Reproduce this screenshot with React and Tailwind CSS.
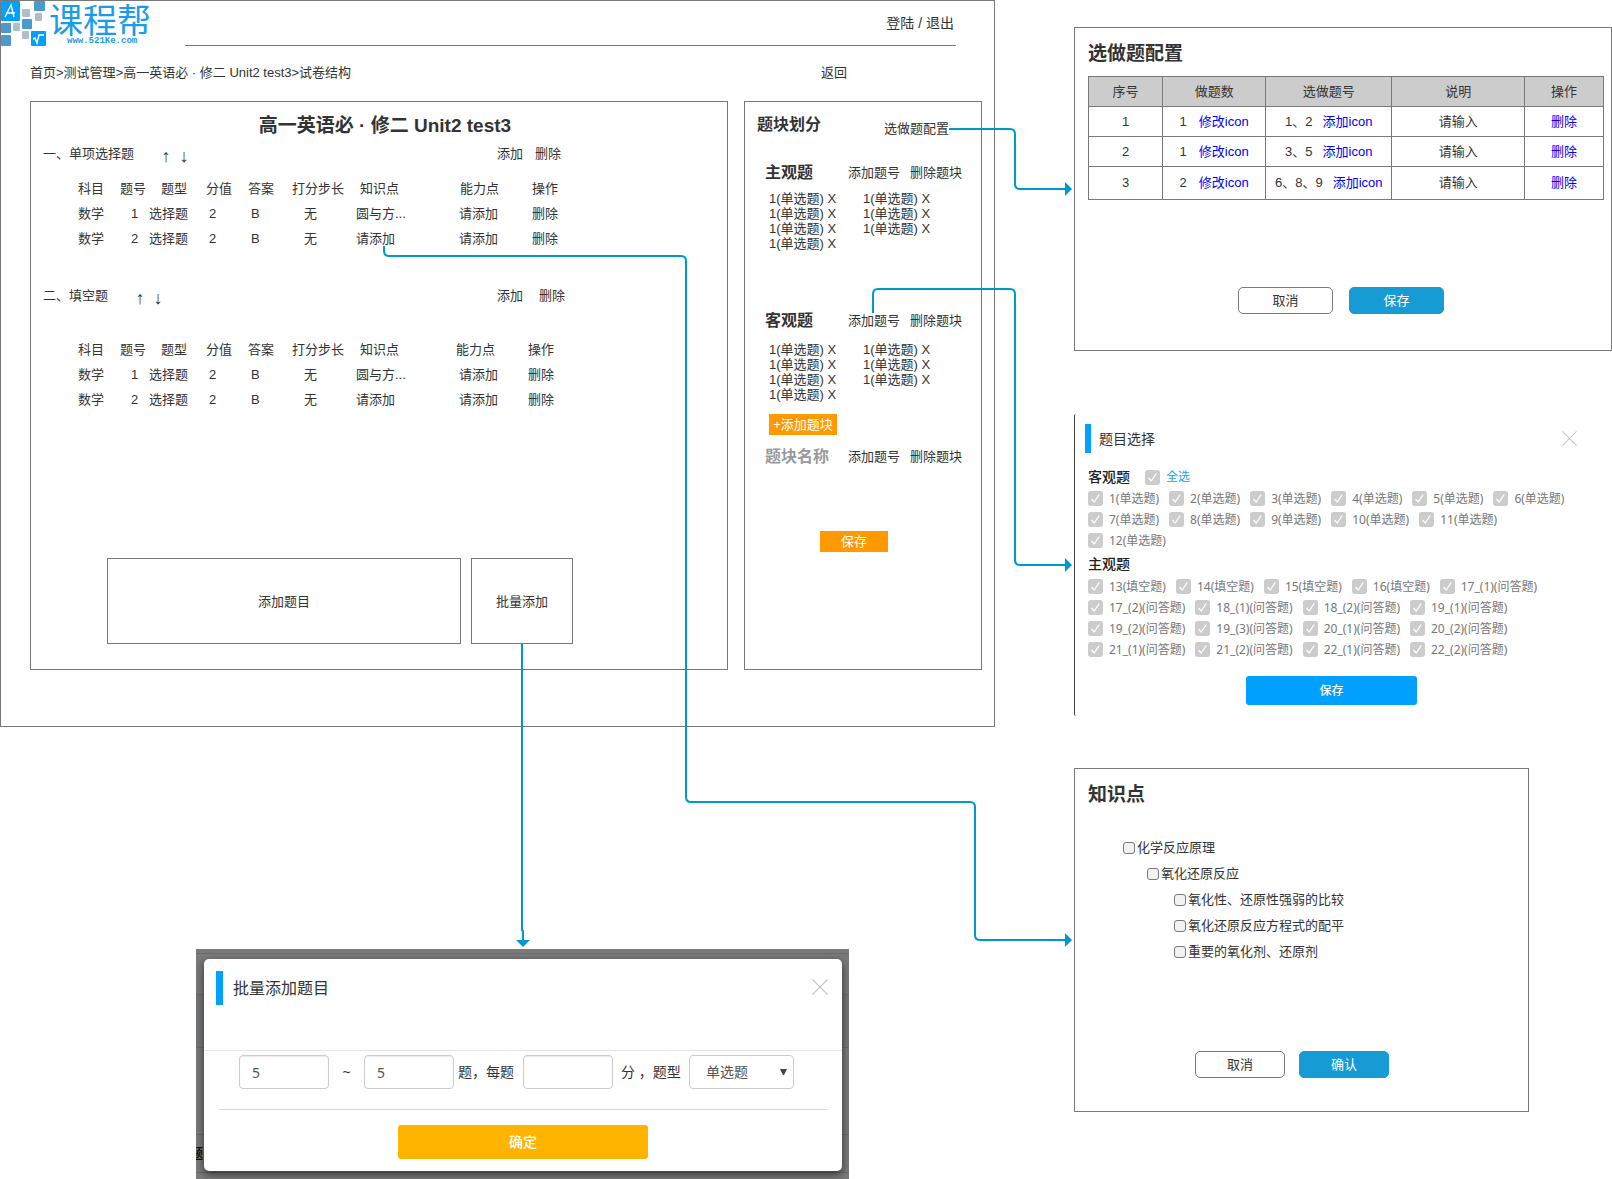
import React from "react";

const SANS = "font-['Liberation_Sans','Noto_Sans_CJK_SC',sans-serif]";
const UI = "font-['Noto_Sans','Noto_Sans_CJK_SC',sans-serif]";

function Logo() {
  return (
    <div className="flex h-[45px] w-[184px] shrink-0 items-start">
      <svg width="48" height="46" viewBox="0 0 48 46" className="shrink-0" aria-hidden="true">
        <rect x="0" y="0" width="19" height="20" rx="1" fill="#00a0ff" />
        <rect x="33" y="0" width="11" height="10" rx="1" fill="#4a9bcb" />
        <rect x="21" y="8" width="8" height="8" rx="1" fill="#b0bec5" />
        <rect x="34" y="12" width="7" height="8" rx="1" fill="#b0bec5" />
        <rect x="21" y="18" width="10" height="10" rx="1" fill="#4a9bcb" />
        <rect x="0" y="22" width="10" height="10" rx="1" fill="#4a9bcb" />
        <rect x="12" y="22" width="7" height="8" rx="1" fill="#b0bec5" />
        <rect x="21" y="30" width="7" height="8" rx="1" fill="#b0bec5" />
        <rect x="0" y="34" width="10" height="11" rx="1" fill="#4a9bcb" />
        <rect x="30" y="30" width="15" height="15" rx="1" fill="#00a0ff" />
        <path d="M4 16 L10 4 L13 16 M5 12 H14" fill="none" stroke="#fff" strokeWidth="1.4" />
        <path d="M32 38 L34 37 L36 42 L38 34 H43" fill="none" stroke="#fff" strokeWidth="1.4" />
      </svg>
      <div className="flex flex-col items-start text-[#1a9cec]">
        <span className="font-['Noto_Sans_CJK_SC',sans-serif] text-[34px] leading-[35px]">课程帮</span>
        <span className="pl-[18px] font-['Liberation_Mono',monospace] text-[9px] font-bold leading-[10px]">
          www.521Ke.com
        </span>
      </div>
    </div>
  );
}

const questionRows = [
  ["数学", "1", "选择题", "2", "B", "无", "圆与方..."],
  ["数学", "2", "选择题", "2", "B", "无", "请添加"],
];

function QuestionTable({ spread }) {
  const inset = spread ? "pl-1" : "";
  return (
    <table className="ml-[35px] w-[489px] table-fixed text-left">
      <colgroup>
        <col className="w-[42px]" />
        <col className="w-[29px]" />
        <col className="w-[57px]" />
        <col className="w-[42px]" />
        <col className="w-[44px]" />
        <col className="w-[64px]" />
        <col className="w-[100px]" />
        <col className="w-[72px]" />
        <col className="w-[39px]" />
      </colgroup>
      <thead>
        <tr className="h-6 [&>th]:p-0 [&>th]:font-normal">
          <th>科目</th>
          <th>题号</th>
          <th><span className="pl-3">题型</span></th>
          <th>分值</th>
          <th>答案</th>
          <th>打分步长</th>
          <th><span className="pl-1">知识点</span></th>
          <th><span className={inset}>能力点</span></th>
          <th><span className={inset}>操作</span></th>
        </tr>
      </thead>
      <tbody>
        {questionRows.map((r) => (
          <tr key={r[1]} className="h-[25px]">
            <td>{r[0]}</td>
            <td className="pl-[11px]">{r[1]}</td>
            <td>{r[2]}</td>
            <td className="pl-[3px]">{r[3]}</td>
            <td className="pl-[3px]">{r[4]}</td>
            <td className="pl-3">{r[5]}</td>
            <td><button type="button">{r[6]}</button></td>
            <td className="pl-[3px]"><button type="button">请添加</button></td>
            <td className={inset}><button type="button">删除</button></td>
          </tr>
        ))}
      </tbody>
    </table>
  );
}

function SectionHead({ title, wide }) {
  return (
    <div className="flex h-5 items-center">
      <div className="flex w-[454px] items-center">
        <h3>{title}</h3>
        <div className="flex pl-[23px] pt-1 text-[18px]">
          <button type="button" aria-label="上移" className="w-[18px]">↑</button>
          <button type="button" aria-label="下移" className="w-[18px]">↓</button>
        </div>
      </div>
      <div className={wide ? "flex gap-4" : "flex gap-3"}>
        <button type="button">添加</button>
        <button type="button">删除</button>
      </div>
    </div>
  );
}

function BlockHead({ title, muted }) {
  return (
    <div className="flex h-5 items-center pl-5">
      <h3 className={muted ? "w-[83px] text-base font-bold text-[#999]" : "w-[83px] text-base font-bold"}>{title}</h3>
      <div className="flex gap-[10px]">
        <button type="button">添加题号</button>
        <button type="button">删除题块</button>
      </div>
    </div>
  );
}

function BlockList() {
  return (
    <ul className="ml-6 grid w-[188px] grid-cols-2 leading-[15px]">
      {[0, 1, 2, 3, 4, 5, 6].map((i) => (
        <li key={i}>1(单选题) X</li>
      ))}
    </ul>
  );
}

function MainWindow() {
  return (
    <main className="border border-[#797979] pb-[56px]">
      <header className="flex">
        <Logo />
        <div className="mr-[38px] flex h-[45px] grow items-center justify-end border-b border-[#797979] pr-[2px] text-sm">
          <a href="#login">登陆 / 退出</a>
        </div>
      </header>
      <div className="mt-[17px] flex h-5 items-center pl-[29px] pr-[147px]">
        <nav>
          <a href="#home">首页</a>&gt;<a href="#tests">测试管理</a>&gt;<a href="#test">高一英语必 · 修二 Unit2 test3</a>&gt;试卷结构
        </nav>
        <a href="#back" className="ml-auto">返回</a>
      </div>
      <div className="mt-[18px] grid grid-cols-[698fr_238fr] gap-4 pl-[29px] pr-3">
        <section className="min-w-0 border border-[#797979] pb-[25px] pl-3 pt-3">
          <h1 className="h-6 text-center text-[19px] font-bold leading-6">高一英语必 · 修二 Unit2 test3</h1>
          <div className="mt-[6px]">
            <SectionHead title="一、单项选择题" />
          </div>
          <div className="mt-[13px]">
            <QuestionTable spread />
          </div>
          <div className="mt-[35px]">
            <SectionHead title="二、填空题" wide />
          </div>
          <div className="mt-8">
            <QuestionTable />
          </div>
          <div className="mt-[146px] flex gap-[10px] pl-16">
            <button type="button" className="h-[86px] w-[354px] border border-[#797979] pt-[2px]">添加题目</button>
            <button type="button" className="h-[86px] w-[102px] border border-[#797979] pt-[2px]">批量添加</button>
          </div>
        </section>
        <section className="min-w-0 border border-[#797979] pt-[11px]">
          <div className="flex items-start justify-between pl-3 pr-8">
            <h2 className="text-base font-bold leading-6">题块划分</h2>
            <button type="button" className="pt-[6px]">选做题配置</button>
          </div>
          <div className="mt-[24px] flex flex-col gap-2">
            <BlockHead title="主观题" />
            <BlockList />
          </div>
          <div className="mt-[60px] flex flex-col gap-[11px]">
            <BlockHead title="客观题" />
            <BlockList />
          </div>
          <button type="button" className="ml-6 mt-3 block h-[21px] w-[68px] bg-[#ff9900] text-white">+添加题块</button>
          <div className="mt-3">
            <BlockHead title="题块名称" muted />
          </div>
          <button type="button" className="ml-[75px] mt-16 block h-[21px] w-[68px] bg-[#ff9900] text-white">保存</button>
        </section>
      </div>
    </main>
  );
}

function CloseIcon({ size }) {
  return (
    <svg width={size} height={size} viewBox="0 0 16 16" aria-hidden="true">
      <path d="M0.5 0.5 L15.5 15.5 M15.5 0.5 L0.5 15.5" stroke="#c8c8c8" strokeWidth="1.1" />
    </svg>
  );
}

function BatchDialog() {
  const field = "h-[34px] w-[90px] rounded border border-[#ccc] bg-white pl-3 text-[#555] shadow-[inset_0_1px_1px_rgba(0,0,0,0.08)]";
  return (
    <div className={"relative ml-[196px] mt-[222px] w-[653px] overflow-hidden bg-[#7a7a7b] pb-2 pl-2 pr-[7px] pt-[10px] text-sm text-[#333] " + UI}>
      <div className="absolute inset-x-0 top-[4px] border-t border-[#6b6b6b]" />
      <div className="absolute inset-x-0 top-[45px] h-[54px] border-y border-[#6b6b6b] bg-[#757678]" />
      <div className="absolute inset-x-0 top-[185px] border-t border-[#6b6b6b]" />
      <div className="absolute inset-x-0 top-[223px] border-t border-[#6b6b6b]" />
      <span className="absolute -left-[6px] top-[198px] text-[13px] font-bold leading-[13px] text-[#111]" aria-hidden="true">题</span>
      <form className="relative rounded-[5px] bg-white pb-3 shadow-[0_3px_9px_rgba(0,0,0,0.6)]" onSubmit={(e) => e.preventDefault()}>
        <div className="flex h-[92px] items-start border-b border-[#e5e5e5] pl-3 pr-[14px] pt-3">
          <div className="h-[34px] w-[7px] bg-[#00a2ff]" />
          <h2 className="pl-[10px] pt-[5px] text-base leading-6">批量添加题目</h2>
          <button type="button" aria-label="关闭" className="ml-auto pt-2">
            <CloseIcon size={16} />
          </button>
        </div>
        <div className="flex items-center pl-[35px] pt-1">
          <input aria-label="起始题号" defaultValue="5" className={field} />
          <span className="w-[35px] text-center">~</span>
          <input aria-label="结束题号" defaultValue="5" className={field} />
          <label htmlFor="score" className="w-[69px] pl-1">题，每题</label>
          <input id="score" className={field} />
          <label htmlFor="kind" className="w-[76px] pl-2">分 ，题型</label>
          <span className="relative">
            <select id="kind" className="h-[34px] w-[105px] appearance-none rounded border border-[#ccc] bg-white pl-4 text-[#555]">
              <option>单选题</option>
            </select>
            <svg width="7" height="6" viewBox="0 0 7 6" className="pointer-events-none absolute right-[7px] top-[14px]" aria-hidden="true">
              <path d="M0 0 H7 L4 6 H3 Z" fill="#444" />
            </svg>
          </span>
        </div>
        <div className="mx-[15px] mt-5 border-t border-[#d6d7de]" />
        <button type="submit" className="ml-[194px] mt-[15px] block h-[34px] w-[250px] rounded-[3px] bg-[#ffb500] font-medium text-white">
          确定
        </button>
      </form>
    </div>
  );
}

function DialogButtons({ ok }) {
  return (
    <>
      <button type="button" className="h-[27px] min-w-[90px] flex-1 rounded-[5px] border border-[#797979] bg-white">取消</button>
      <button type="button" className="h-[27px] min-w-[90px] flex-1 rounded-[5px] border border-[#169bd5] bg-[#169bd5] text-white">{ok}</button>
    </>
  );
}

const optionRows = [
  ["1", "1", "1、2"],
  ["2", "1", "3、5"],
  ["3", "2", "6、8、9"],
];

function OptionalDialog() {
  return (
    <section className="border border-[#797979] pb-9 pl-[13px] pr-[7px] pt-3">
      <h2 className="text-[19px] font-bold leading-7">选做题配置</h2>
      <table className="mt-2 w-full table-fixed border-collapse text-center [&_td]:border [&_td]:border-[#797979] [&_th]:border [&_th]:border-[#797979]">
        <colgroup>
          <col className="w-[14.4%]" />
          <col className="w-[20%]" />
          <col className="w-[24.5%]" />
          <col className="w-[25.8%]" />
          <col className="w-[15.3%]" />
        </colgroup>
        <thead>
          <tr className="h-[30px] bg-[#ccc] [&>th]:font-normal">
            <th>序号</th>
            <th>做题数</th>
            <th>选做题号</th>
            <th>说明</th>
            <th>操作</th>
          </tr>
        </thead>
        <tbody>
          {optionRows.map((r) => (
            <tr key={r[0]} className="h-[30px] last:h-[33px]">
              <td>{r[0]}</td>
              <td>
                <span className="flex justify-center gap-3">
                  {r[1]}
                  <a href="#edit" className="text-[#0000ff]">修改icon</a>
                </span>
              </td>
              <td>
                <span className="flex justify-center gap-[10px]">
                  {r[2]}
                  <a href="#add" className="text-[#0000ff]">添加icon</a>
                </span>
              </td>
              <td>请输入</td>
              <td><a href="#remove" className="text-[#0000ff]">删除</a></td>
            </tr>
          ))}
        </tbody>
      </table>
      <div className="ml-[150px] mt-[87px] flex w-[206px] gap-4">
        <DialogButtons ok="保存" />
      </div>
    </section>
  );
}

function Tick({ children, accent }) {
  return (
    <label className="flex items-center gap-[6px]">
      <span className="grid">
        <input type="checkbox" defaultChecked className="col-start-1 row-start-1 size-[15px] appearance-none rounded-[3px] bg-[#ccc]" />
        <svg width="15" height="15" viewBox="0 0 15 15" className="pointer-events-none col-start-1 row-start-1" aria-hidden="true">
          <path d="M3.5 8 L6.2 11 L11.2 3.5" fill="none" stroke="#fff" strokeWidth="1.3" />
        </svg>
      </span>
      <span className={accent ? "text-[#1a9ff5]" : ""}>{children}</span>
    </label>
  );
}

const objective = [
  ["1", "2", "3", "4", "5", "6"],
  ["7", "8", "9", "10", "11"],
  ["12"],
].map((row) => row.map((n) => n + "(单选题)"));

const subjective = [
  ["13(填空题)", "14(填空题)", "15(填空题)", "16(填空题)", "17_(1)(问答题)"],
  ["17_(2)(问答题)", "18_(1)(问答题)", "18_(2)(问答题)", "19_(1)(问答题)"],
  ["19_(2)(问答题)", "19_(3)(问答题)", "20_(1)(问答题)", "20_(2)(问答题)"],
  ["21_(1)(问答题)", "21_(2)(问答题)", "22_(1)(问答题)", "22_(2)(问答题)"],
];

function TickRows({ rows }) {
  return rows.map((row) => (
    <div key={row[0]} className="flex h-[21px] items-center gap-[10px]">
      {row.map((t) => (
        <Tick key={t}>{t}</Tick>
      ))}
    </div>
  ));
}

function PickDialog() {
  return (
    <section className={"mt-[63px] w-full max-w-[513px] rounded-l-[2px] border-l border-[#444] pb-[11px] pl-[10px] pt-[10px] text-xs text-[#777] " + UI}>
      <div className="flex items-center">
        <div className="h-[29px] w-[6px] bg-[#00a2ff]" />
        <h2 className="pl-2 text-sm leading-5 text-[#333]">题目选择</h2>
        <button type="button" aria-label="关闭" className="ml-auto pr-[10px]">
          <CloseIcon size={15} />
        </button>
      </div>
      <div className="pl-[3px]">
        <div className="mt-[13px] flex h-[22px] items-center gap-[15px]">
          <h3 className="text-sm font-medium text-[#222]">客观题</h3>
          <Tick accent>全选</Tick>
        </div>
        <TickRows rows={objective} />
        <h3 className="flex h-[25px] items-center text-sm font-medium text-[#222]">主观题</h3>
        <TickRows rows={subjective} />
      </div>
      <button type="button" className="ml-[161px] mt-4 block h-[29px] w-[171px] rounded-[3px] bg-[#00a0ff] font-medium text-white">
        保存
      </button>
    </section>
  );
}

function Node({ children, level }) {
  const indent = ["pl-[35px]", "pl-[59px]", "pl-[86px]"][level];
  return (
    <li className={indent}>
      <label className="flex h-[26px] items-center gap-[2px]">
        <input type="checkbox" className="size-3 appearance-none rounded-[3px] border border-[#797979] bg-[#f2f2f2]" />
        {children}
      </label>
    </li>
  );
}

function KnowledgeDialog() {
  return (
    <section className="mt-[52px] w-full max-w-[455px] border border-[#797979] pb-[33px] pl-[13px] pt-3">
      <h2 className="text-[19px] font-bold leading-7">知识点</h2>
      <ul className="mt-[26px]">
        <Node level={0}>化学反应原理</Node>
        <Node level={1}>氧化还原反应</Node>
        <Node level={2}>氧化性、还原性强弱的比较</Node>
        <Node level={2}>氧化还原反应方程式的配平</Node>
        <Node level={2}>重要的氧化剂、还原剂</Node>
      </ul>
      <div className="ml-[107px] mt-[86px] flex w-[194px] gap-[14px]">
        <DialogButtons ok="确认" />
      </div>
    </section>
  );
}

function Connectors() {
  return (
    <svg viewBox="0 0 1612 1179" preserveAspectRatio="none" className="pointer-events-none absolute inset-0 size-full" aria-hidden="true">
      <g fill="none" stroke="#0099cc" strokeWidth="2">
        <path d="M949 129 H1010 Q1015 129 1015 134 V184 Q1015 189 1020 189 H1066" />
        <path d="M873 313 V294 Q873 289 878 289 H1010 Q1015 289 1015 294 V560 Q1015 565 1020 565 H1066" />
        <path d="M384 246 V251 Q384 256 389 256 H681 Q686 256 686 261 V797 Q686 802 691 802 H970 Q975 802 975 807 V935 Q975 940 980 940 H1066" />
        <path d="M522 644 V930 L523 931 V941" />
      </g>
      <g fill="#0099cc">
        <path d="M1065 182 L1072 189 L1065 196 Z" />
        <path d="M1065 558 L1072 565 L1065 572 Z" />
        <path d="M1065 933 L1072 940 L1065 947 Z" />
        <path d="M516 940 H530 L523 947 Z" />
      </g>
    </svg>
  );
}

export default function App() {
  return (
    <div className={"relative grid grid-cols-[995fr_538fr] items-start gap-x-[79px] bg-white text-[13px] leading-5 text-[#333] " + SANS}>
      <div className="min-w-0">
        <MainWindow />
        <BatchDialog />
      </div>
      <div className="min-w-0 pt-[27px]">
        <OptionalDialog />
        <PickDialog />
        <KnowledgeDialog />
      </div>
      <Connectors />
    </div>
  );
}
